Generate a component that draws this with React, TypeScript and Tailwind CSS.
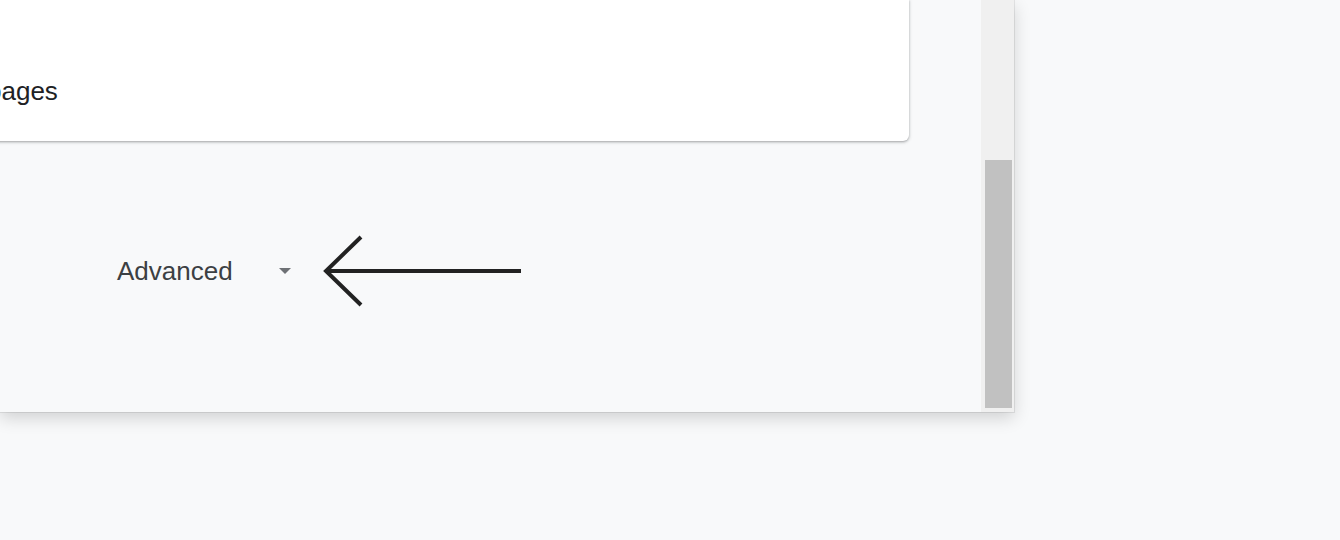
export default function App() {
  return (
    <div
      className="w-[1340px] h-[540px] bg-[#f8f9fa] overflow-hidden"
      style={{ fontFamily: "'Liberation Sans', Arial, sans-serif" }}
    >
      {/* browser window */}
      <div className="flex w-[1014px] h-[412px] bg-[#f8f9fa] shadow-[0_0_0_1px_rgba(0,0,0,0.08),0_6px_16px_rgba(0,0,0,0.16)]">
        <div className="flex-1 flex flex-col overflow-hidden">
          {/* settings card, scrolled so only its end shows */}
          <div className="-ml-[40px] w-[949px] h-[141px] shrink-0 bg-white rounded-b-md shadow-[0_1px_2px_rgba(60,64,67,0.3),0_1px_3px_1px_rgba(60,64,67,0.15)]">
            <p className="pt-[76px] pl-[27px] text-[26px] leading-[30px] text-[#202124] whitespace-nowrap">
              pages
            </p>
          </div>

          {/* advanced toggle */}
          <div className="flex items-center mt-[115px] pl-[117px] h-[30px]">
            <span className="text-[26px] leading-[30px] text-[#3c4043]">Advanced</span>
            <svg width="12" height="6" viewBox="0 0 12 6" className="ml-[46px]">
              <path d="M0 0h12L6 6z" fill="#6e7175" />
            </svg>
            <svg width="202" height="76" viewBox="0 0 202 76" className="ml-[30px]">
              <path
                d="M200 38H6M40 4L5 38l35 34"
                stroke="#222"
                strokeWidth="4"
                fill="none"
              />
            </svg>
          </div>
        </div>

        {/* scrollbar */}
        <div className="w-[33px] bg-[#f0f0f0] flex flex-col pl-[4px] pr-[2px] pt-[160px] pb-[4px]">
          <div className="flex-1 bg-[#c1c1c1]" />
        </div>
      </div>
    </div>
  );
}
